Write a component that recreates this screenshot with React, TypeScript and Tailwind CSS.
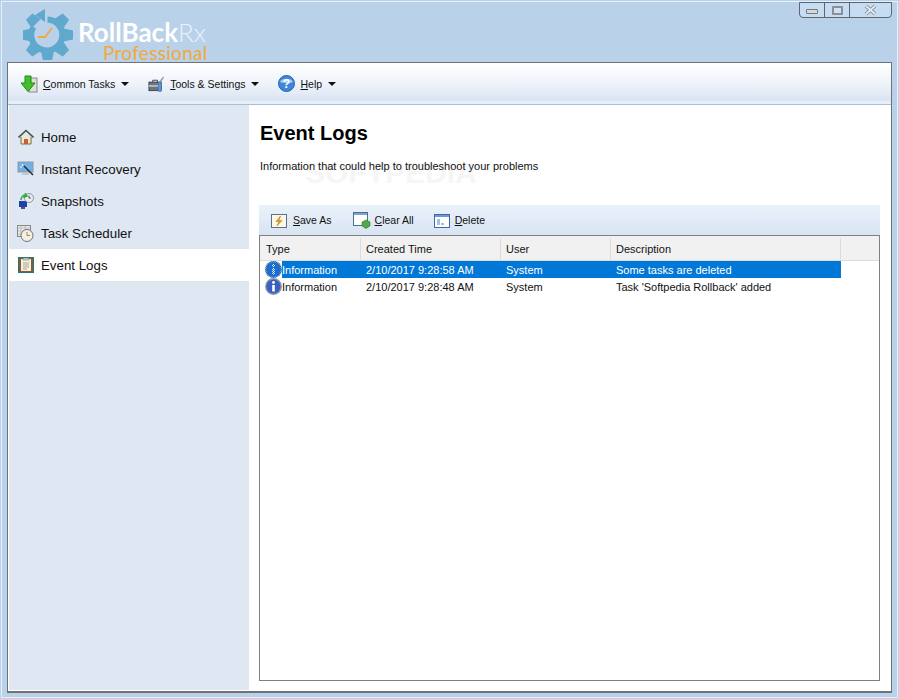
import type { ReactNode } from 'react'

const gearTeeth = [0, 45, 90, 135, 180, 225, 270]

function GearLogo() {
  return (
    <svg width="50" height="52" viewBox="0 0 50 52" className="shrink-0">
      <g fill="#5fa9cf">
        {gearTeeth.map(a => (
          <path key={a} d="M20 1h9l2 10H18z" transform={`rotate(${a + 45} 24.500 27)`} />
        ))}
      </g>
      <path d="M24.500 11.500A15.500 15.500 0 1 1 10.500 19" fill="none" stroke="#5fa9cf" strokeWidth="6" />
      <path d="M12 7l10-6v13z" fill="#5fa9cf" />
      <path d="M15 29h7l7-9" fill="none" stroke="#f2a93b" strokeWidth="1.800" />
    </svg>
  )
}

function DownArrowIcon() {
  return (
    <svg width="17" height="18" viewBox="0 0 17 18">
      <rect x="8" y="3" width="8" height="14" fill="#dfe0d8" stroke="#8a8a80" />
      <path d="M4 1h6v7h4l-7 8.500L0 8h4z" fill="#3fc02c" stroke="#1f8a17" />
    </svg>
  )
}

function ToolsIcon() {
  return (
    <svg width="18" height="18" viewBox="0 0 18 18">
      <rect x="1" y="7" width="13" height="9" fill="#6d7480" stroke="#3f444c" />
      <rect x="1" y="10" width="13" height="2" fill="#b5bac2" />
      <path d="M5 7V5h5v2" fill="none" stroke="#3f444c" />
      <path d="M12 6l4-5 1 1-3 5z" fill="#9aa2ac" />
      <rect x="11" y="7" width="3" height="10" rx="1" fill="#5d9bd8" stroke="#2f6aa6" strokeWidth="0.600" />
    </svg>
  )
}

function HelpIcon() {
  return (
    <svg width="17" height="17" viewBox="0 0 17 17">
      <circle cx="8.500" cy="8.500" r="8" fill="#3f86dc" stroke="#2a62ad" />
      <path d="M2 7a7 5 0 0 1 13 0c-3 1.500-9 1.500-13 0z" fill="#a6cdf5" />
      <text x="8.500" y="13" textAnchor="middle" fontSize="12" fontWeight="700" fill="#fff" fontFamily="'Liberation Sans', sans-serif">?</text>
    </svg>
  )
}

function HomeIcon() {
  return (
    <svg width="16" height="16" viewBox="0 0 16 16">
      <path d="M3 8v7h10V8" fill="#f4e6c8" stroke="#7d6a4a" />
      <path d="M0.500 8.500L8 1.500l7.500 7" fill="none" stroke="#3d5a4a" strokeWidth="1.600" />
      <rect x="6" y="10" width="4" height="5" fill="#c4622d" />
    </svg>
  )
}

function RecoveryIcon() {
  return (
    <svg width="17" height="16" viewBox="0 0 17 16">
      <rect x="1" y="1" width="15" height="10" fill="#6fb0e6" stroke="#8f9aa5" />
      <rect x="5" y="12" width="7" height="2" fill="#c4c9ce" />
      <path d="M7 5l9 9" stroke="#2b2b2b" strokeWidth="1.500" />
      <path d="M5 3l1 2M3 6l2 0" stroke="#fff" />
    </svg>
  )
}

function SnapshotIcon() {
  return (
    <svg width="16" height="17" viewBox="0 0 16 17">
      <rect x="1" y="8" width="8" height="6" fill="#1f3fb0" />
      <rect x="3" y="14" width="4" height="2" fill="#555" />
      <circle cx="11" cy="5" r="4.500" fill="#e8eef2" stroke="#8a97a3" />
      <path d="M11 2.500V5h2" stroke="#555" fill="none" />
      <path d="M3 7c0-3 2-5 4-5l-1 2 3-1-2-3" stroke="#35a83a" strokeWidth="1.500" fill="none" />
    </svg>
  )
}

function SchedulerIcon() {
  return (
    <svg width="17" height="17" viewBox="0 0 17 17">
      <rect x="0.500" y="0.500" width="13" height="11" fill="#e9e9e9" stroke="#85888c" />
      <path d="M1 3h12M1 6h12M1 9h12M4 1v10M8 1v10" stroke="#a8abae" strokeWidth="0.600" />
      <circle cx="10" cy="10.500" r="6" fill="#f2efe6" stroke="#6f7275" />
      <path d="M10 7v3.500h3" fill="none" stroke="#c47a2c" />
    </svg>
  )
}

function ClipboardIcon() {
  return (
    <svg width="16" height="16" viewBox="0 0 16 16">
      <rect x="0.500" y="0.500" width="15" height="15" fill="#8a5a2c" stroke="#1f7a80" />
      <rect x="3" y="2" width="10" height="12" fill="#f5f1e2" />
      <rect x="5" y="1" width="6" height="2" fill="#d8d4c4" stroke="#6a6a5a" strokeWidth="0.500" />
      <path d="M5 6h6M5 8h6M5 10h6M5 12h4" stroke="#a9a798" />
    </svg>
  )
}

function SaveAsIcon() {
  return (
    <svg width="16" height="16" viewBox="0 0 16 16">
      <rect x="0.500" y="1.500" width="15" height="13" fill="#fdf8e6" stroke="#5c6f8c" />
      <path d="M9.500 3L5 8.500h3L6 13l5-5.500H8z" fill="#eaa52a" stroke="#a86f12" strokeWidth="0.500" />
    </svg>
  )
}

function ClearAllIcon() {
  return (
    <svg width="18" height="17" viewBox="0 0 18 17">
      <rect x="0.500" y="0.500" width="14" height="13" fill="#fff" stroke="#4f6d94" />
      <rect x="1" y="1" width="13" height="2" fill="#7fa4d1" />
      <path d="M13 8l4 2v4l-4 2.500-4-2.500v-4z" fill="#4fa84a" stroke="#2e7a2c" strokeWidth="0.600" />
    </svg>
  )
}

function DeleteIcon() {
  return (
    <svg width="16" height="16" viewBox="0 0 16 16">
      <rect x="0.500" y="1.500" width="15" height="13" fill="#fff" stroke="#3f68a8" />
      <rect x="1" y="2" width="14" height="2" fill="#6f97d4" />
      <path d="M3 7h3M3 9h3M3 11h3M7 11h3" stroke="#4a7fc9" />
    </svg>
  )
}

function InfoIcon({ selected }: { selected?: boolean }) {
  return (
    <svg width="17" height="17" viewBox="0 0 17 17" className="shrink-0">
      <defs>
        <pattern id="dither" width="2" height="2" patternUnits="userSpaceOnUse">
          <rect width="1" height="1" fill="#0078d7" />
          <rect x="1" y="1" width="1" height="1" fill="#0078d7" />
        </pattern>
      </defs>
      <circle cx="8.500" cy="8.500" r="7.700" fill="#3a5fc4" stroke="#8a93a3" strokeWidth="1.400" />
      <circle cx="8.500" cy="4.500" r="1.400" fill="#fff" />
      <rect x="7.200" y="7" width="2.600" height="6.500" fill="#fff" />
      {selected && <circle cx="8.500" cy="8.500" r="8.400" fill="url(#dither)" />}
    </svg>
  )
}

function Caret() {
  return <span className="ml-[6px] h-0 w-0 border-x-[4px] border-t-[4px] border-x-transparent border-t-[#111]" />
}

function MenuButton({ icon, first, rest, className }: { icon: ReactNode; first: string; rest: string; className: string }) {
  return (
    <div className={`flex items-center ${className}`}>
      <span className="mr-[5px] flex w-[17px] justify-center">{icon}</span>
      <span className="pt-[2px]"><u>{first}</u>{rest}</span>
      <Caret />
    </div>
  )
}

function ActionButton({ icon, first, rest, className }: { icon: ReactNode; first: string; rest: string; className: string }) {
  return (
    <div className={`flex items-center text-[10.500px] ${className}`}>
      {icon}
      <span><u>{first}</u>{rest}</span>
    </div>
  )
}

const navItems = [
  { label: 'Home', icon: <HomeIcon /> },
  { label: 'Instant Recovery', icon: <RecoveryIcon /> },
  { label: 'Snapshots', icon: <SnapshotIcon /> },
  { label: 'Task Scheduler', icon: <SchedulerIcon /> },
  { label: 'Event Logs', icon: <ClipboardIcon />, active: true },
]

const logRows = [
  { time: '2/10/2017 9:28:58 AM', desc: 'Some tasks are deleted', selected: true },
  { time: '2/10/2017 9:28:48 AM', desc: "Task 'Softpedia Rollback' added" },
]

export default function App() {
  return (
    <div className="h-[699px] w-[899px] bg-[#b9d1e9] p-px font-['Liberation_Sans',sans-serif] text-[11px] text-[#111]">
      <div className="flex h-[697px] w-[897px] flex-col border border-[#e6f0fb] px-[5px] pb-[4px]">
        <header className="flex h-[60px] shrink-0 items-start justify-between">
          <div className="ml-[16px] mt-[6px] flex">
            <GearLogo />
            <div className="ml-[5px] mt-[11px] font-['Lato',sans-serif]">
              <div className="h-[26px] text-[26px] leading-[26px] text-white">
                <span className="font-bold">RollBack</span><span className="font-light text-[#eaf3fb]">Rx</span>
              </div>
              <div className="ml-[25px] mt-[-2px] h-[19px] text-[19px] leading-[19px] tracking-[0.3px] text-[#f2a93b]">Professional</div>
            </div>
          </div>
          <div className="flex h-[16px] w-[93px] rounded-b-[4px] border border-[#5c6570] bg-[#c6dcf2]">
            <div className="flex w-[25px] items-center justify-center border-r border-[#5c6570]">
              <span className="mt-[3px] h-[5px] w-[12px] rounded-[1px] border border-[#777] bg-[#d8d8d8]" />
            </div>
            <div className="flex w-[25px] items-center justify-center border-r border-[#5c6570]">
              <span className="h-[9px] w-[11px] rounded-[1px] border-2 border-[#8a8f95] bg-[#cfe0f2]" />
            </div>
            <div className="flex flex-1 items-center justify-center">
              <svg width="13" height="12" viewBox="0 0 13 12">
                <path d="M2 2l9 8M11 2l-9 8" stroke="#7f858b" strokeWidth="3.600" />
                <path d="M2 2l9 8M11 2l-9 8" stroke="#e6ecf2" strokeWidth="1.800" />
              </svg>
            </div>
          </div>
        </header>

        <div className="flex min-h-0 flex-1 flex-col border-2 border-t border-r border-[#6e7278] border-l-[1px] bg-white">
          <div className="flex h-[42px] shrink-0 flex-col border-b border-[#a9bfd6]">
            <div className="flex flex-1 items-center bg-gradient-to-b from-white via-[#f0f5fb] to-[#d9e4f2] pl-[13px] pt-[3px] text-[10.500px]">
              <MenuButton icon={<DownArrowIcon />} first="C" rest="ommon Tasks" className="mr-[19px]" />
              <MenuButton icon={<ToolsIcon />} first="T" rest="ools & Settings" className="mr-[19px]" />
              <MenuButton icon={<HelpIcon />} first="H" rest="elp" className="" />
            </div>
            <div className="h-[3px] bg-[#e6eef8]" />
          </div>

          <div className="flex min-h-0 flex-1">
            <nav className="mb-px ml-px w-[240px] shrink-0 bg-[#dfe7f3] pt-[16px]">
              {navItems.map(item => (
                <div
                  key={item.label}
                  className={`flex h-[32px] items-center pl-[8px] text-[13.300px] ${item.active ? 'bg-white' : ''}`}
                >
                  <span className="mr-[7px] flex w-[17px] justify-center">{item.icon}</span>
                  <span className="pt-[2px]">{item.label}</span>
                </div>
              ))}
            </nav>

            <main className="relative flex min-w-0 flex-1 flex-col pl-[10px] pr-[11px] pt-[16px]">
              <h1 className="ml-px text-[20px] font-bold leading-[24px] text-black">Event Logs</h1>
              <div className="pointer-events-none absolute left-[56px] top-[45px] text-[30px] font-bold text-[#f6f6f6]">
                SOFTPEDIA
              </div>
              <p className="relative ml-px mt-[12px] leading-[18px]">Information that could help to troubleshoot your problems</p>

              <div className="relative mt-[30px] flex h-[30px] shrink-0 items-center border-t border-[#e8f0f9] bg-gradient-to-b from-[#eaf1fa] to-[#d8e4f2] pl-[12px]">
                <ActionButton icon={<SaveAsIcon />} first="S" rest="ave As" className="mr-[21px] gap-[6px]" />
                <ActionButton icon={<ClearAllIcon />} first="C" rest="lear All" className="mr-[20px] gap-[4px]" />
                <ActionButton icon={<DeleteIcon />} first="D" rest="elete" className="gap-[5px]" />
              </div>

              <div className="mb-[10px] min-h-0 flex-1 border border-[#808080] bg-white">
                <div className="flex h-[25px] border-b border-[#dcdcdc] bg-[#f1f1f1] pt-[2px]">
                  <div className="flex w-[101px] items-center border-r border-[#dcdcdc] pl-[6px]">Type</div>
                  <div className="flex w-[140px] items-center border-r border-[#dcdcdc] pl-[5px]">Created Time</div>
                  <div className="flex w-[110px] items-center border-r border-[#dcdcdc] pl-[5px]">User</div>
                  <div className="flex w-[230px] items-center border-r border-[#dcdcdc] pl-[5px]">Description</div>
                </div>
                {logRows.map(row => (
                  <div key={row.time} className="flex h-[17px] w-[581px] items-center">
                    <div className="flex w-[101px] items-center pl-[5px]">
                      <InfoIcon selected={row.selected} />
                      <span className={`h-[17px] flex-1 leading-[18px] ${row.selected ? 'bg-[#0078d7] text-white' : ''}`}>Information</span>
                    </div>
                    <div className={`flex h-[17px] flex-1 items-center pt-px ${row.selected ? 'bg-[#0078d7] text-white' : ''}`}>
                      <span className="w-[140px] pl-[5px]">{row.time}</span>
                      <span className="w-[110px] pl-[5px]">System</span>
                      <span className="pl-[5px]">{row.desc}</span>
                    </div>
                  </div>
                ))}
              </div>
            </main>
          </div>
        </div>
      </div>
    </div>
  )
}
